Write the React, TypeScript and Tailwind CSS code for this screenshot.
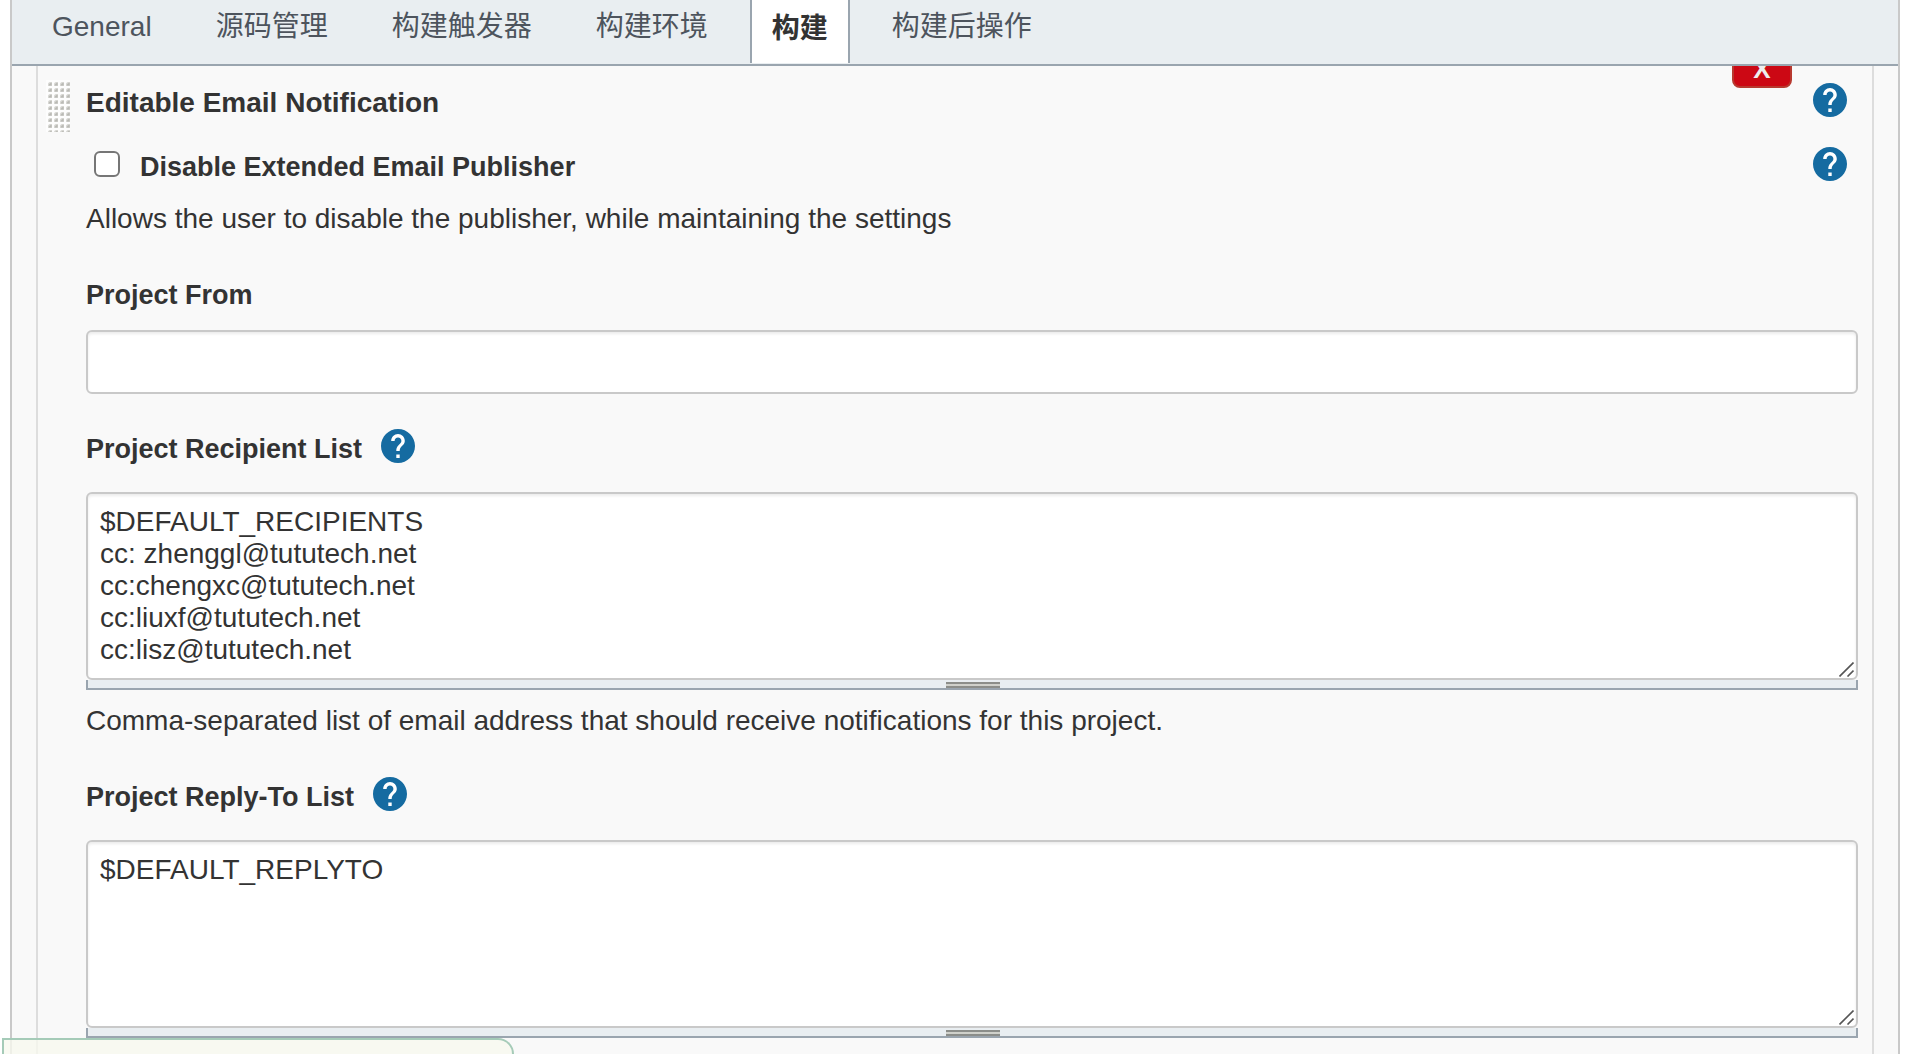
import { useId, type ReactNode } from "react";

const tabs = ["General", "源码管理", "构建触发器", "构建环境", "构建", "构建后操作"];
const activeTab = "构建";

function HelpButton({ topic }: { topic: string }) {
  return (
    <button type="button" aria-label={`Help for feature: ${topic}`} className="block size-[34px] shrink-0">
      <svg viewBox="2 2 20 20" className="block size-full" aria-hidden="true">
        <circle cx="12" cy="12" r="9" fill="#fff" />
        <path
          fill="#156ba1"
          d="M12 2C6.48 2 2 6.48 2 12s4.48 10 10 10 10-4.48 10-10S17.52 2 12 2zm1 17h-2v-2h2v2zm2.07-7.75l-.9.92C13.45 12.9 13 13.5 13 15h-2v-.5c0-1.1.45-2.1 1.17-2.83l1.24-1.26c.37-.36.59-.86.59-1.41 0-1.1-.9-2-2-2s-2 .9-2 2H8c0-2.21 1.79-4 4-4s4 1.79 4 4c0 .88-.36 1.68-.93 2.25z"
        />
      </svg>
    </button>
  );
}

function DragHandle() {
  return (
    <svg className="block h-[52px] w-6" viewBox="0 0 24 52" aria-hidden="true">
      <defs>
        <pattern id="drag-dots" width="6" height="6" patternUnits="userSpaceOnUse">
          <rect width="6" height="6" fill="#fdfdfd" />
          <path d="M2 6V4.2C2 3 3 2 4.2 2H6v4z" fill="#d6d6d2" />
          <path d="M3 5.6V4.6L4.6 3H5.6v2.6z" fill="#b9b9b4" />
        </pattern>
      </defs>
      <rect width="24" height="52" fill="url(#drag-dots)" />
    </svg>
  );
}

function ResizableTextArea({ id, value }: { id: string; value: string }) {
  return (
    <div>
      <div className="relative">
        <textarea
          id={id}
          rows={5}
          defaultValue={value}
          className="block w-full resize-none rounded-md border-2 border-[#c9c9c9] bg-white p-3 leading-8 shadow-[inset_0_2px_3px_rgba(0,0,0,0.08)] outline-none"
        />
        <svg className="absolute right-1 bottom-[3px] size-[15px]" viewBox="0 0 15 15" aria-hidden="true">
          <path d="M0.5 14.5L14.5 0.5M8.5 14.5L14.5 8.5" stroke="#555" strokeWidth="1.6" fill="none" />
        </svg>
      </div>
      <div className="flex h-2.5 justify-center border-x-2 border-b-2 border-[#9aa5af] bg-[#e9eef1] pt-0.5 pl-0.5">
        <div className="h-1.5 w-[54px] border-y-2 border-[#8c8e8a] bg-[#d0d1cb]" />
      </div>
    </div>
  );
}

function Field({ label, help, children }: { label: string; help?: boolean; children: (id: string) => ReactNode }) {
  const id = useId();
  return (
    <div>
      <div className="flex h-8 items-center gap-[19px]">
        <label htmlFor={id} className="text-[27px] leading-8 font-bold">
          {label}
        </label>
        {help && (
          <div className="-mt-1.5">
            <HelpButton topic={label} />
          </div>
        )}
      </div>
      <div className={help ? "mt-[27px]" : "mt-[19px]"}>{children(id)}</div>
    </div>
  );
}

export default function App() {
  return (
    <div className="h-screen overflow-hidden bg-white px-2.5 font-['Liberation_Sans','Noto_Sans_CJK_SC',sans-serif] text-[28px] leading-8 text-[#333]">
      <div className="flex h-full flex-col border-x-2 border-[#c9c9c9] bg-[#f9f9f9]">
        <nav className="relative z-10 flex h-[66px] shrink-0 border-b-2 border-[#9aa5af] bg-[#e9eef1] pl-2">
          {tabs.map((tab) =>
            tab === activeTab ? (
              <a
                key={tab}
                href="#build"
                aria-current="page"
                className="mx-2.5 flex h-[63px] items-start border-x-2 border-[#9aa5af] bg-white px-5 pt-[13px] font-bold"
              >
                {tab}
              </a>
            ) : (
              <a key={tab} href="#section" className="px-8 pt-[11px] text-[#4d545d]">
                {tab}
              </a>
            ),
          )}
        </nav>

        <main className="mx-6 flex min-h-0 flex-1 border-x-2 border-[#dddddd] pr-3.5 pl-2">
          <div className="w-10 shrink-0 pt-3.5">
            <DragHandle />
          </div>

          <form className="min-w-0 flex-1" onSubmit={(e) => e.preventDefault()}>
            <div className="flex items-start pr-[11px]">
              <h2 className="flex-1 pt-[21px] font-bold">Editable Email Notification</h2>
              <button
                type="button"
                aria-label="Delete"
                className="-mt-4 mr-[21px] flex h-[38px] w-[60px] items-center justify-center rounded-lg border-2 border-[#b8392f] bg-[#cc0814] text-[26px] font-bold text-[#eeeeee]"
              >
                X
              </button>
              <div className="pt-[17px]">
                <HelpButton topic="Editable Email Notification" />
              </div>
            </div>

            <div className="mt-[26px] flex items-center pr-[11px] pl-2">
              <input
                id="disable-publisher"
                type="checkbox"
                className="size-[26px] appearance-none rounded-md border-2 border-[#767676] bg-white"
              />
              <label htmlFor="disable-publisher" className="ml-5 flex-1 pt-1.5 text-[27px] font-bold">
                Disable Extended Email Publisher
              </label>
              <HelpButton topic="Disable Extended Email Publisher" />
            </div>
            <p className="mt-5">Allows the user to disable the publisher, while maintaining the settings</p>

            <div className="mt-11">
              <Field label="Project From">
                {(id) => (
                  <input
                    id={id}
                    type="text"
                    className="block h-16 w-full rounded-md border-2 border-[#c9c9c9] bg-white px-3 shadow-[inset_0_2px_3px_rgba(0,0,0,0.08)] outline-none"
                  />
                )}
              </Field>
            </div>

            <div className="mt-[39px]">
              <Field label="Project Recipient List" help>
                {(id) => (
                  <ResizableTextArea
                    id={id}
                    value={
                      "$DEFAULT_RECIPIENTS\ncc: zhenggl@tututech.net\ncc:chengxc@tututech.net\ncc:liuxf@tututech.net\ncc:lisz@tututech.net"
                    }
                  />
                )}
              </Field>
              <p className="mt-[15px]">
                Comma-separated list of email address that should receive notifications for this project.
              </p>
            </div>

            <div className="mt-11">
              <Field label="Project Reply-To List" help>
                {(id) => <ResizableTextArea id={id} value="$DEFAULT_REPLYTO" />}
              </Field>
            </div>
          </form>
        </main>
      </div>

      <div
        className="fixed bottom-0 left-0.5 h-4 w-[512px] rounded-tr-[20px] border-2 border-b-0 border-[#a5cbb8] bg-[#f7f9ef]/80"
        aria-hidden="true"
      />
    </div>
  );
}
